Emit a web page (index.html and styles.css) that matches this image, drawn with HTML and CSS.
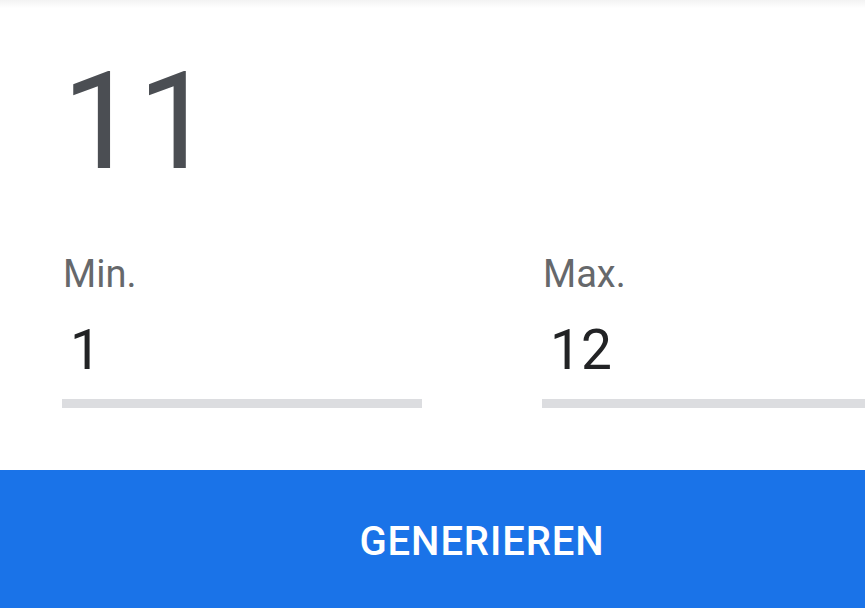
FILE: index.html
```html
<!DOCTYPE html>
<html lang="de">
<head>
<meta charset="utf-8">
<title>Zufallszahl</title>
<link rel="stylesheet" href="styles.css">
</head>
<body>
<div class="viewport">
  <div class="page">
    <div class="result">11</div>
    <div class="fields">
      <div class="field">
        <div class="label">Min.</div>
        <div class="value">1</div>
        <div class="line"></div>
      </div>
      <div class="field">
        <div class="label">Max.</div>
        <div class="value">12</div>
        <div class="line"></div>
      </div>
    </div>
    <div class="button">GENERIEREN</div>
  </div>
</div>
</body>
</html>
```
FILE: styles.css
```css
html, body {
  margin: 0;
  padding: 0;
  overflow: hidden;
  background: #ffffff;
}
.viewport {
  width: 100vw;
  height: 100vh;
  overflow: hidden;
}
.page {
  width: 964px;
  height: 608px;
  font-family: Roboto, "Noto Sans", sans-serif;
  background: linear-gradient(#f3f3f3 0, #ffffff 8px);
  display: flex;
  flex-direction: column;
}
.result {
  font-size: 135px;
  line-height: 1;
  color: #4b4e53;
  margin: 55px 0 0 62px;
}
.fields {
  display: flex;
  gap: 120px;
  padding: 0 62px;
  margin-top: 65px;
}
.field {
  width: 360px;
  display: flex;
  flex-direction: column;
}
.label {
  font-size: 38px;
  line-height: 1;
  color: #66686b;
  padding-left: 1px;
}
.value {
  font-size: 55px;
  line-height: 1;
  color: #222325;
  margin-top: 30px;
  padding-left: 8px;
}
.line {
  height: 9px;
  background: #dcdde0;
  margin-top: 21px;
}
.button {
  margin-top: 62px;
  flex: 1;
  background: #1a73e8;
  color: #ffffff;
  font-size: 40px;
  font-weight: 500;
  line-height: 1;
  text-align: center;
  padding-top: 52px;
  letter-spacing: 0.9px;
}
```
